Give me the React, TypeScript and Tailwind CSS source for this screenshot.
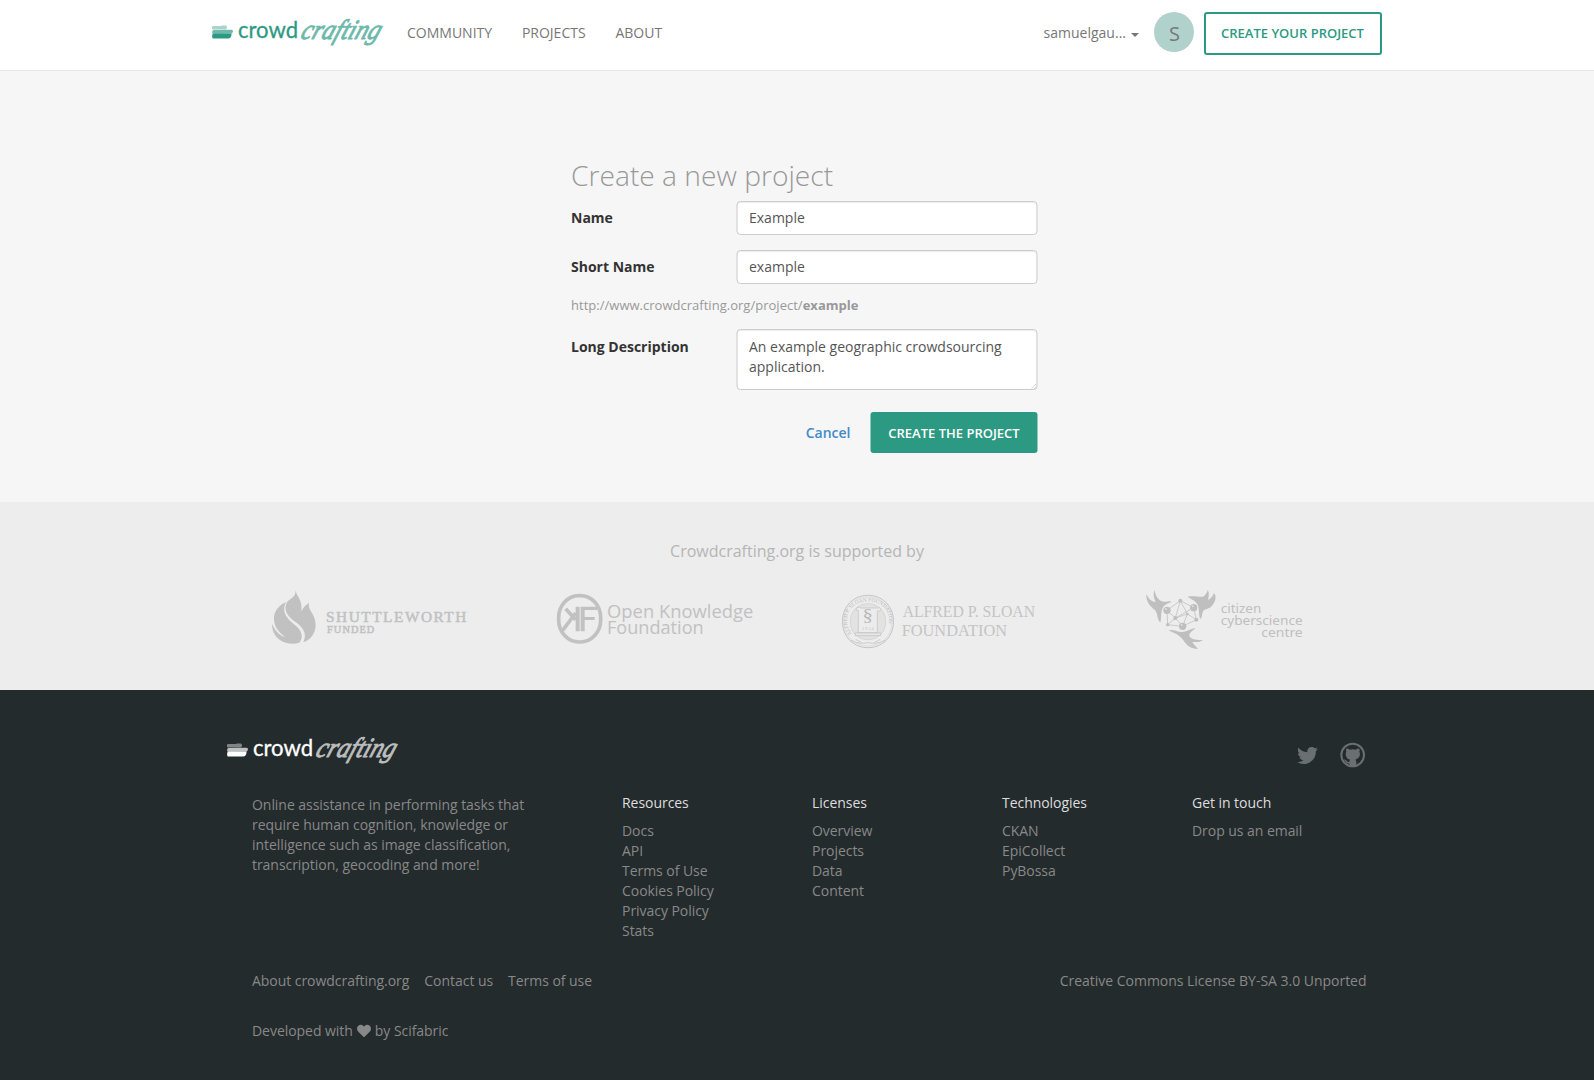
import React from "react";
import { FaTwitter, FaHeart } from "react-icons/fa";

type LogoColors = { top: string; mid: string; base: string; script: string };

function BrandLogo({ top, mid, base, script }: LogoColors) {
  return (
    <svg width="174" height="40" viewBox="0 0 174 40" className="-mb-1 block shrink-0 overflow-visible">
      <path d="M0 10.800Q0 10 1.500 10L9 10L10 9.400L14 9.500Q15.500 10.500 15 12L14 13.600H1Q0 13.600 0 12.500Z" fill={top} />
      <path d="M0.300 14.800L1.500 13.900L19 13.700Q21.300 13.500 21 15.500Q20.500 18 18 18.300H1Q-0.300 17.500 0.300 14.800Z" fill={mid} />
      <path d="M0.300 18.300L3 17.800L19.500 18Q19.500 22.300 16 22.600L1 22.600Q-0.200 22.300 0.300 18.300Z" fill={base} />
      <text x="26" y="22" fontSize="23" textLength="60" lengthAdjust="spacingAndGlyphs" fill={base} fontFamily="Lato, sans-serif" stroke={base} strokeWidth="0.3">crowd</text>
      <text x="0" y="0" transform="translate(87.500 22.700) skewX(-20)" fontSize="28" fontStyle="italic" textLength="79" lengthAdjust="spacingAndGlyphs" fill={script} stroke={script} strokeWidth="0.900" strokeLinejoin="round" fontFamily="'Liberation Serif', serif">crafting</text>
    </svg>
  );
}

function ShuttleworthLogo() {
  return (
    <svg width="220" height="75" viewBox="0 0 660 225" fill="#c1c1c1" className="block">
      <path d="M106 30C110 50 128 58 124 94C130 82 138 74 147 68C142 92 167 100 167 136C166 160 152 180 130 187C140 164 134 148 112 130C88 112 68 96 80 68C90 54 110 52 106 30Z" />
      <path d="M78 66C62 98 84 118 106 136C128 154 130 174 118 188C100 194 76 192 60 180C44 168 36 152 36 132C44 148 54 166 76 171C62 162 44 146 42 120C40 92 60 74 78 66Z" />
      <text x="198" y="125" fontSize="46" textLength="421" lengthAdjust="spacing" stroke="#c1c1c1" strokeWidth="1.500" fontFamily="'Liberation Serif', serif">SHUTTLEWORTH</text>
      <text x="201" y="159" fontSize="31" textLength="142" lengthAdjust="spacing" stroke="#c1c1c1" strokeWidth="1.500" fontFamily="'Liberation Serif', serif">FUNDED</text>
    </svg>
  );
}

function OpenKnowledgeLogo() {
  return (
    <svg width="220" height="75" viewBox="0 0 660 225" fill="#c1c1c1" className="block">
      <rect x="41" y="47" width="126" height="139" rx="61" ry="66" fill="none" stroke="#c1c1c1" strokeWidth="11" />
      <path d="M92 80H104V154H92ZM107 80H156V90H119V111H149V120H119V154H107Z" />
      <path d="M62 86L92 119M53 151L92 99" stroke="#c1c1c1" strokeWidth="11" fill="none" />
      <text x="186" y="114" fontSize="56" textLength="439" lengthAdjust="spacingAndGlyphs" fontFamily="'Open Sans', sans-serif">Open Knowledge</text>
      <text x="186" y="162" fontSize="56" textLength="290" lengthAdjust="spacingAndGlyphs" fontFamily="'Open Sans', sans-serif">Foundation</text>
    </svg>
  );
}

function SloanLogo() {
  return (
    <svg width="220" height="75" viewBox="0 0 660 225" fill="#c4c4c4" className="block">
      <defs>
        <path id="seal-arc" d="M51 162C20 120 38 65 99 65C160 65 178 120 147 162" />
      </defs>
      <rect x="22.500" y="46" width="153" height="157" rx="74" ry="76" fill="none" stroke="#c4c4c4" strokeWidth="3" />
      <rect x="27" y="51" width="144" height="147" rx="70" ry="71" fill="none" stroke="#d3d3d3" strokeWidth="2" />
      <rect x="46" y="71" width="106" height="108" rx="52" ry="52" fill="#e2e2e2" stroke="#cccccc" strokeWidth="2" />
      <text fontSize="16" fontFamily="'Liberation Serif', serif" fill="#bbbbbb">
        <textPath href="#seal-arc" textLength="244">ALFRED P. SLOAN FOUNDATION</textPath>
      </text>
      <path d="M64 84Q70 78 78 84H128Q136 80 138 88Q136 96 127 93V158H70V92Q62 94 64 84Z" fill="#ececec" stroke="#c8c8c8" strokeWidth="2.500" />
      <path d="M61 159H137V167H61Z" fill="#e8e8e8" stroke="#c4c4c4" strokeWidth="2.500" />
      <path d="M48 181Q72 194 99 188Q126 194 150 181M62 178L80 188M118 188L136 178" fill="none" stroke="#cccccc" strokeWidth="3" />
      <text transform="translate(98 123) scale(1.300 1)" fontSize="48" textAnchor="middle" fontFamily="'Liberation Serif', serif" fill="#b7b7b7">§</text>
      <text x="81" y="150" fontSize="14" textLength="35" fontFamily="'Liberation Serif', serif">1934</text>
      <text x="203" y="111" fontSize="48" textLength="397" lengthAdjust="spacingAndGlyphs" fontFamily="'Liberation Serif', serif">ALFRED P. SLOAN</text>
      <text x="200" y="167" fontSize="48" textLength="316" lengthAdjust="spacingAndGlyphs" fontFamily="'Liberation Serif', serif">FOUNDATION</text>
    </svg>
  );
}

function CyberscienceLogo() {
  return (
    <svg width="180" height="75" viewBox="0 0 540 225" fill="#bfbfbf" className="block">
      <path d="M34 42C40 54 46 64 62 66C56 54 54 44 58 30C62 46 68 58 80 64C92 68 106 60 109 66C100 70 88 74 83 84C76 98 80 116 76 128C66 118 68 98 60 90C46 80 32 64 34 42Z" />
      <path d="M158 50C174 46 192 52 204 50C212 46 216 38 218 30C224 40 221 52 219 60C228 56 234 48 237 39C245 48 242 64 233 75C222 90 208 84 203 96C200 106 202 112 196 117C190 104 194 86 188 74C180 60 168 58 158 50Z" />
      <path d="M101 151C116 146 128 158 144 156C156 154 168 146 182 144C174 152 162 158 163 168C168 180 188 180 204 180C194 188 182 186 172 186C178 196 184 200 189 207C172 208 156 198 147 184C136 164 116 160 101 151Z" />
      <path d="M136 62L96 91L98 134L143 139L184 119L176 83L136 62L121 114L96 91M136 62L157 102L143 139L121 114L98 134M121 114L157 102L184 119M121 114L176 83" fill="none" stroke="#c3c3c3" strokeWidth="2.500" />
      <circle cx="96" cy="91" r="11" />
      <circle cx="176" cy="83" r="11" />
      <circle cx="143" cy="139" r="11" />
      <circle cx="136" cy="62" r="6" />
      <circle cx="121" cy="114" r="6" />
      <circle cx="98" cy="134" r="5" />
      <circle cx="184" cy="119" r="6" />
      <circle cx="157" cy="102" r="4" />
      <circle cx="93" cy="87" r="3" fill="#dddddd" />
      <circle cx="173" cy="79" r="3" fill="#dddddd" />
      <circle cx="140" cy="135" r="3" fill="#dddddd" />
      <g fontSize="40" fontFamily="'Noto Sans', sans-serif">
        <text x="257" y="99" textLength="122" lengthAdjust="spacingAndGlyphs">citizen</text>
        <text x="257" y="134" textLength="246" lengthAdjust="spacingAndGlyphs">cyberscience</text>
        <text x="379" y="170" textLength="124" lengthAdjust="spacingAndGlyphs">centre</text>
      </g>
    </svg>
  );
}

function GithubBadge() {
  return (
    <svg width="26" height="26" viewBox="0 0 78 78" fill="#6a6f71" className="block">
      <circle cx="38" cy="39" r="34" fill="none" stroke="#6a6f71" strokeWidth="6" />
      <path d="M19 20Q24 18 29 23Q38 21 47 23Q53 18 58 20Q60 24 58 29Q61 34 59 42Q56 51 46 53Q49 56 49 61V72H28V64Q20 66 17 59L12 53Q18 52 21 58Q24 61 28 59Q28 55 31 53Q20 51 18 42Q16 34 19 29Q17 24 19 20Z" />
    </svg>
  );
}

const inputClass =
  "block w-[301px] rounded border border-[#cccccc] bg-white px-3 text-sm text-[#555555] shadow-[inset_0_1px_1px_rgba(0,0,0,0.075)] outline-none";

const columns = [
  { title: "Resources", links: ["Docs", "API", "Terms of Use", "Cookies Policy", "Privacy Policy", "Stats"] },
  { title: "Licenses", links: ["Overview", "Projects", "Data", "Content"] },
  { title: "Technologies", links: ["CKAN", "EpiCollect", "PyBossa"] },
  { title: "Get in touch", links: ["Drop us an email"] },
];

export default function App() {
  return (
    <div className="flex h-[1080px] w-full flex-col overflow-hidden bg-[#f6f6f6] font-['Open_Sans',sans-serif] text-sm leading-5 text-[#333333]">
      <header className="h-[71px] shrink-0 border-b border-[#e7e7e7] bg-white">
        <div className="mx-auto flex w-[1170px] items-start">
          <div className="pt-4">
            <BrandLogo top="#abd3cb" mid="#6cb9aa" base="#2c9a82" script="#6cb9aa" />
          </div>
          <nav className="ml-[21px] flex gap-[29.800px] pt-[23px] text-[#777777]">
            <a>COMMUNITY</a>
            <a>PROJECTS</a>
            <a>ABOUT</a>
          </nav>
          <div className="ml-auto flex items-start">
            <div className="flex items-center pt-[23px] text-[#777777]">
              samuelgau...
              <span className="mt-[3px] ml-[5px] border-x-4 border-t-4 border-x-transparent border-t-[#777777]" />
            </div>
            <div className="mt-3 ml-[15px] flex size-10 items-center justify-center rounded-full bg-[#b1d2cc] pt-[3px] pl-px text-xl text-[#777777]">
              S
            </div>
            <button className="mt-3 ml-2.5 h-[42.500px] w-[178px] rounded-[3px] border-2 border-[#2c9a82] pr-px text-[13px] font-semibold text-[#2c9a82]">
              CREATE YOUR PROJECT
            </button>
          </div>
        </div>
      </header>

      <main className="h-[431px] shrink-0">
        <form className="mx-auto w-[467px] translate-x-[7.500px] pt-[88px]">
          <h1 className="h-[42px] text-[28.200px] leading-[33px] font-light whitespace-nowrap text-[#999999]">Create a new project</h1>
          <div className="mb-[15px] flex justify-between pr-px">
            <label className="pt-[7px] font-bold">Name</label>
            <input className={inputClass + " h-[34px] pt-0 pb-0.5"} defaultValue="Example" />
          </div>
          <div className="flex justify-between pr-px">
            <label className="pt-[7px] font-bold">Short Name</label>
            <input className={inputClass + " h-[34px] pt-0 pb-0.5"} defaultValue="example" />
          </div>
          <p className="mt-[11px] mb-3.5 text-[13px] tracking-[0.020px] text-[#999999]">
            http://www.crowdcrafting.org/project/<strong>example</strong>
          </p>
          <div className="flex justify-between pr-px">
            <label className="pt-2 font-bold">Long Description</label>
            <div className="relative">
              <textarea
                className={inputClass + " h-[61px] resize-none overflow-hidden pt-[7px] pb-1 leading-5"}
                defaultValue="An example geographic crowdsourcing application."
              />
              <svg width="5" height="5" viewBox="0 0 5 5" className="absolute right-px bottom-px">
                <path d="M0 4.500L4.500 0M3 4.500L4.500 3" stroke="#999999" strokeWidth="0.700" strokeDasharray="1 0.700" />
              </svg>
            </div>
          </div>
          <div className="mt-[21.500px] flex items-center justify-end gap-[19.500px] pr-px">
            <a className="pt-px font-semibold text-[#428bca]">Cancel</a>
            <button type="button" className="h-[41px] w-[167px] rounded-[3px] bg-[#2c9a82] pt-px pl-px text-[13px] font-semibold text-white">
              CREATE THE PROJECT
            </button>
          </div>
        </form>
      </main>

      <section className="h-[188px] shrink-0 bg-[#ededed] pt-[38px]">
        <h2 className="text-center text-base leading-[22px] text-[#b5b5b5]">Crowdcrafting.org is supported by</h2>
        <div className="mx-auto mt-[18px] flex w-[1074px]">
          <ShuttleworthLogo />
          <div className="ml-[65px]"><OpenKnowledgeLogo /></div>
          <div className="ml-[70px]"><SloanLogo /></div>
          <div className="ml-20"><CyberscienceLogo /></div>
        </div>
      </section>

      <footer className="grow bg-[#242b2d] tracking-[-0.045px] text-[#888888]">
        <div className="mx-auto w-[1140px]">
          <div className="flex items-start justify-between pt-11">
            <BrandLogo top="#808486" mid="#bfc1c1" base="#ffffff" script="#bcbebe" />
            <div className="mt-2 mr-px flex items-center gap-[22px]">
              <FaTwitter className="mt-px size-[21px] text-[#6a6f71]" />
              <GithubBadge />
            </div>
          </div>
          <div className="mt-[23px] flex pl-[25px]">
            <p className="mt-0.5 w-[370px] shrink-0 pr-[90px]">
              Online assistance in performing tasks that require human cognition, knowledge or intelligence such as image classification, transcription, geocoding and more!
            </p>
            {columns.map((col) => (
              <div key={col.title} className="w-[190px] shrink-0">
                <h3 className="mb-2 text-[#dddddd]">{col.title}</h3>
                <ul>
                  {col.links.map((link) => (
                    <li key={link}>{link}</li>
                  ))}
                </ul>
              </div>
            ))}
          </div>
          <div className="mt-[30px] flex pr-[0.500px] pl-[25px]">
            <div className="flex gap-[15px]">
              <a>About crowdcrafting.org</a>
              <a>Contact us</a>
              <a>Terms of use</a>
            </div>
            <span className="ml-auto tracking-[-0.020px]">Creative Commons License BY-SA 3.0 Unported</span>
          </div>
          <div className="mt-[30px] flex items-center gap-1 pl-[25px]">
            Developed with <FaHeart className="size-[14px]" /> by Scifabric
          </div>
        </div>
      </footer>
    </div>
  );
}
